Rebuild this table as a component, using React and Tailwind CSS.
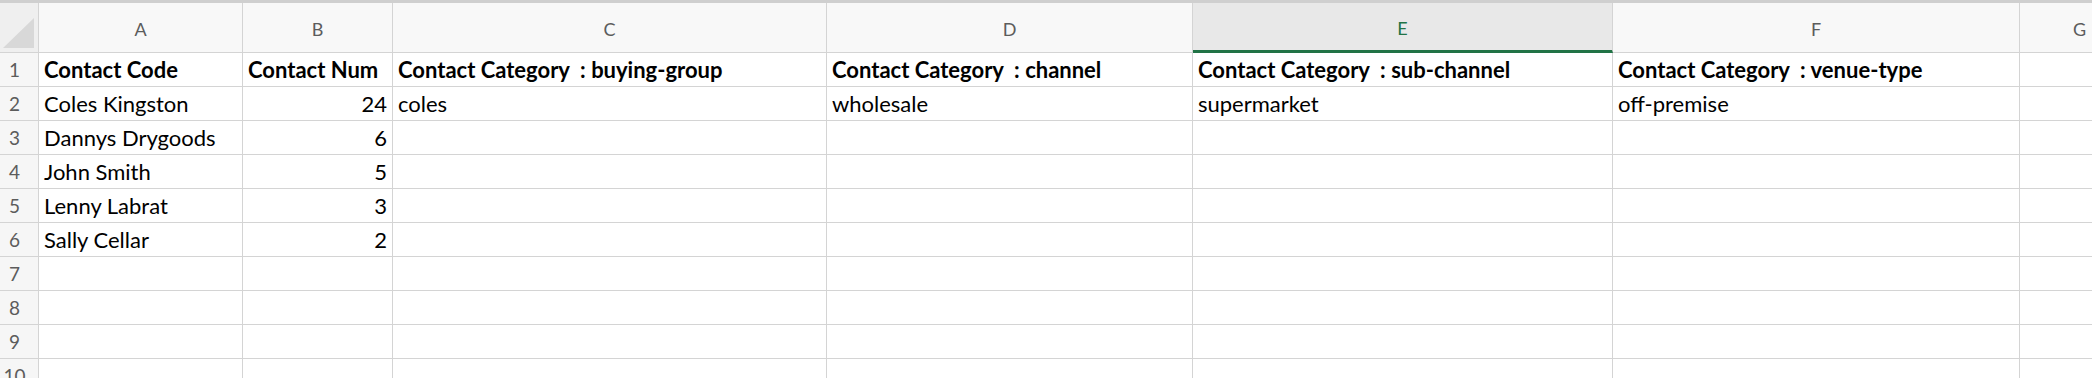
import React from 'react';

const columns = ['A', 'B', 'C', 'D', 'E', 'F', 'G'];

const rows = [
  ['Contact Code', 'Contact Num', 'Contact Category  : buying-group', 'Contact Category  : channel', 'Contact Category  : sub-channel', 'Contact Category  : venue-type', ''],
  ['Coles Kingston', '24', 'coles', 'wholesale', 'supermarket', 'off-premise', ''],
  ['Dannys Drygoods', '6', '', '', '', '', ''],
  ['John Smith', '5', '', '', '', '', ''],
  ['Lenny Labrat', '3', '', '', '', '', ''],
  ['Sally Cellar', '2', '', '', '', '', ''],
  ['', '', '', '', '', '', ''],
  ['', '', '', '', '', '', ''],
  ['', '', '', '', '', '', ''],
  ['', '', '', '', '', '', ''],
];

const Corner = () => (
  <div className="h-[50px] bg-[#efefef] border-r border-b border-[#d4d4d4] relative">
    <svg className="absolute inset-0" width="38" height="49" viewBox="0 0 38 49">
      <polygon points="3,45 34,45 34,15" fill="#d8d8d8" />
    </svg>
  </div>
);

const ColumnHeader = ({ letter }) => {
  const selected = letter === 'E';
  return (
    <div
      className={`h-[50px] flex items-center justify-center text-[18px] pt-[3px] border-r ${
        selected
          ? 'bg-[#e8e8e8] text-[#217346] border-b-[3px] border-b-[#217346] border-r-[#d4d4d4]'
          : 'bg-[#f8f8f8] text-[#5c5c5c] border-b border-[#d4d4d4]'
      }`}
    >
      {letter}
    </div>
  );
};

export default function App() {
  return (
    <div className="w-[2092px] h-[378px] overflow-hidden bg-white font-['Lato',sans-serif] border-t-[3px] border-[#cfcfcf]">
      <div className="grid grid-cols-[39px_204px_150px_434px_366px_420px_407px_120px]">
        <Corner />
        {columns.map((c) => (
          <ColumnHeader key={c} letter={c} />
        ))}
        {rows.map((row, r) => (
          <React.Fragment key={r}>
            <div className="h-[34px] bg-[#f6f6f6] border-r border-b border-[#d4d4d4] text-[19px] text-[#5c5c5c] leading-[34px] pr-[9px] text-center">
              {r + 1}
            </div>
            {row.map((cell, c) => (
              <div
                key={c}
                className={`h-[34px] border-r border-b border-[#d4d4d4] text-[22px] leading-[33px] text-black whitespace-pre px-[5px] ${
                  r === 0 ? 'font-bold' : ''
                } ${c === 1 && r > 0 ? 'text-right' : ''}`}
              >
                {cell}
              </div>
            ))}
          </React.Fragment>
        ))}
      </div>
    </div>
  );
}
